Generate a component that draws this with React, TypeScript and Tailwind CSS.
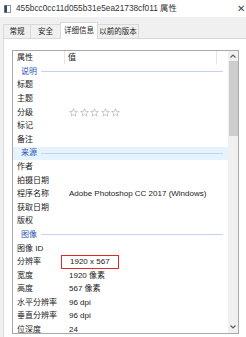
import React from 'react';

type Row =
  | { kind: 'group'; label: string; hover?: boolean }
  | { kind: 'prop'; label: string; value?: string; stars?: boolean; marked?: boolean };

const rows: Row[] = [
  { kind: 'group', label: '说明' },
  { kind: 'prop', label: '标题' },
  { kind: 'prop', label: '主题' },
  { kind: 'prop', label: '分级', stars: true },
  { kind: 'prop', label: '标记' },
  { kind: 'prop', label: '备注' },
  { kind: 'group', label: '来源', hover: true },
  { kind: 'prop', label: '作者' },
  { kind: 'prop', label: '拍摄日期' },
  { kind: 'prop', label: '程序名称', value: 'Adobe Photoshop CC 2017 (Windows)' },
  { kind: 'prop', label: '获取日期' },
  { kind: 'prop', label: '版权' },
  { kind: 'group', label: '图像' },
  { kind: 'prop', label: '图像 ID' },
  { kind: 'prop', label: '分辨率', value: '1920 x 567', marked: true },
  { kind: 'prop', label: '宽度', value: '1920 像素' },
  { kind: 'prop', label: '高度', value: '567 像素' },
  { kind: 'prop', label: '水平分辨率', value: '96 dpi' },
  { kind: 'prop', label: '垂直分辨率', value: '96 dpi' },
  { kind: 'prop', label: '位深度', value: '24' },
];

const Star = () => (
  <svg width="9" height="9" viewBox="0 0 10 10" className="shrink-0">
    <path
      d="M5 0.8 L6.2 3.7 L9.3 3.9 L6.9 5.9 L7.7 9 L5 7.3 L2.3 9 L3.1 5.9 L0.7 3.9 L3.8 3.7 Z"
      fill="none"
      stroke="#b4b4b4"
      strokeWidth="0.8"
      strokeLinejoin="round"
    />
  </svg>
);

const tabs = [
  { label: '常规', w: 'w-[28px]' },
  { label: '安全', w: 'w-[31px]' },
  { label: '详细信息', w: 'w-[38px]' },
  { label: '以前的版本', w: 'w-[42px]' },
];

export default function App() {
  return (
    <div
      className="w-[246px] h-[337px] overflow-hidden bg-[#f0f0f0] text-[8px] text-[#1a1a1a] flex flex-col"
      style={{ fontFamily: '"Liberation Sans", "Noto Sans CJK SC", sans-serif' }}
    >
      {/* title bar */}
      <div className="h-[17px] bg-white flex items-center shrink-0">
        <svg width="7" height="8" viewBox="0 0 7 8" className="ml-[4px] mr-[5px]">
          <rect x="0.5" y="0.5" width="6" height="7" fill="#fff" stroke="#8a97a8" />
          <rect x="0.5" y="0.5" width="2.5" height="7" fill="#2f4a6e" />
        </svg>
        <span className="text-[8.3px] leading-none text-[#333]">455bcc0cc11d055b31e5ea21738cf011 属性</span>
        <span className="ml-auto mr-[1px] text-[10px] leading-none text-[#444]">✕</span>
      </div>

      {/* tabs */}
      <div className="h-[21px] flex items-end pl-[3px] shrink-0 relative z-10">
        {tabs.map((t, i) => {
          const active = i === 2;
          return (
            <div
              key={t.label}
              className={
                active
                  ? `${t.w} h-[17px] bg-white border border-b-0 border-[#d9d9d9] -mb-px -mr-px flex items-center justify-center`
                  : `${t.w} h-[14px] bg-[#f0f0f0] border border-[#d9d9d9] border-b-0 -mr-px flex items-center justify-center`
              }
            >
              <span className="leading-none text-[7.5px] whitespace-nowrap">{t.label}</span>
            </div>
          );
        })}
      </div>

      {/* panel */}
      <div className="flex-1 ml-[3px] bg-white border-t border-l border-[#d9d9d9] pt-[11px] pl-[8px]">
        <div className="w-[227px] h-[284px] border border-[#a9a9a9] flex">
          <div className="flex-1 flex flex-col overflow-hidden">
            {/* header */}
            <div className="h-[13px] flex items-center shrink-0">
              <div className="w-[52px] h-full flex items-center pl-[4px] border-r border-[#e5e5e5]">属性</div>
              <div className="w-[152px] h-full flex items-center pl-[3px] border-r border-[#e5e5e5]">值</div>
            </div>
            <div className="h-[1px] shrink-0" />
            {rows.map((r, i) =>
              r.kind === 'group' ? (
                <div
                  key={i}
                  className={`h-[13.6px] shrink-0 flex items-center pl-[8px] pr-[5px] ${r.hover ? 'bg-[#e5f3ff]' : ''}`}
                >
                  <span className="text-[#2a55b5] leading-none">{r.label}</span>
                  <div className="flex-1 h-px bg-[#c5d3ee] ml-[4px]" />
                </div>
              ) : (
                <div key={i} className="h-[13.6px] shrink-0 flex items-center">
                  <div className="w-[52px] pl-[4px] leading-none whitespace-nowrap">{r.label}</div>
                  <div className="pl-[4px] flex items-center leading-none whitespace-nowrap">
                    {r.stars ? (
                      <div className="flex gap-[1.5px]">
                        <Star />
                        <Star />
                        <Star />
                        <Star />
                        <Star />
                      </div>
                    ) : r.marked ? (
                      <span className="-ml-[8px] border-[1.5px] border-[#e02a2a] px-[8px] py-[2px]">{r.value}</span>
                    ) : (
                      r.value
                    )}
                  </div>
                </div>
              )
            )}
          </div>
          {/* scrollbar */}
          <div className="w-[10px] bg-[#f0f0f0] flex flex-col items-center shrink-0">
            <div className="h-[10px] flex items-center justify-center">
              <svg width="6" height="4" viewBox="0 0 6 4">
                <path d="M0.5 3.5 L3 1 L5.5 3.5" fill="none" stroke="#606060" strokeWidth="1.2" />
              </svg>
            </div>
            <div className="w-[9px] h-[75px] bg-[#cdcdcd]" />
            <div className="flex-1" />
            <div className="h-[12px] flex items-center justify-center">
              <svg width="6" height="4" viewBox="0 0 6 4">
                <path d="M0.5 0.5 L3 3 L5.5 0.5" fill="none" stroke="#606060" strokeWidth="1.2" />
              </svg>
            </div>
          </div>
        </div>
      </div>
    </div>
  );
}
